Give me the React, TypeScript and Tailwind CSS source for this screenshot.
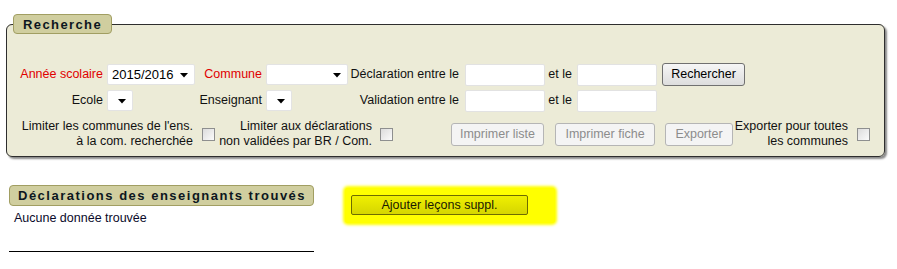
import React from 'react'

const font = { fontFamily: '"Liberation Sans", Arial, sans-serif' }

function Select({ value, w }: { value?: string; w: string }) {
  return (
    <div className={`${w} h-[21px] flex items-center justify-between bg-white border border-[#e3e3e3] rounded-[2px] pl-[4px] pr-[6px] text-[13px] text-black`}>
      <span>{value ?? ''}</span>
      <svg width="8" height="5" viewBox="0 0 8 5" className="mt-[2px] shrink-0">
        <path d="M0 0h8L4 4.5z" fill="#000" />
      </svg>
    </div>
  )
}

function Input() {
  return <div className="w-[80px] h-[22px] bg-white border border-[#e2e2e2] rounded-[2px]" />
}

function Checkbox() {
  return (
    <div className="w-[13px] h-[13px] border border-[#8e8f8f] bg-gradient-to-br from-[#dcdcdc] to-[#fbfbfb] shrink-0" />
  )
}

function Btn({ label, w, disabled }: { label: string; w: string; disabled?: boolean }) {
  return (
    <div
      className={`${w} h-[23px] flex items-center justify-center rounded-[3px] whitespace-nowrap border ${
        disabled
          ? 'border-[#b5b5b5] bg-[#f4f4f4] text-[#8c8c8c]'
          : 'border-[#707070] bg-gradient-to-b from-[#f6f6f6] to-[#dddddd] text-black'
      }`}
    >
      {label}
    </div>
  )
}

export default function App() {
  return (
    <div style={font} className="w-[897px] h-[269px] bg-white pt-[14px] pl-[6px] text-[12.5px] leading-[15px] text-[#111]">
      <fieldset className="w-[879px] border border-[#2e2e2e] rounded-[6px] bg-[#ecebd7] px-[6px] pt-[30px] pb-[7px] shadow-[2px_2px_2px_#8a8a8a]">
        <legend className="h-[20px] px-[9px] flex items-center bg-[#d0ce9f] border border-[#a19e62] rounded-[4px] text-[13px] font-bold tracking-[1.4px] text-[#0c1620]">
          Recherche
        </legend>

        <div className="flex items-center h-[21px] whitespace-nowrap">
          <div className="w-[94px] pr-[4px] text-right text-[#e00000]">Année scolaire</div>
          <Select value="2015/2016" w="w-[88px]" />
          <div className="w-[71px] pr-[4px] text-right text-[#e00000]">Commune</div>
          <Select w="w-[82px]" />
          <div className="w-[117px] pr-[6px] text-right">Déclaration entre le</div>
          <Input />
          <div className="w-[32px] pr-[5px] text-right">et le</div>
          <Input />
          <div className="ml-[5px]">
            <Btn label="Rechercher" w="w-[83px]" />
          </div>
        </div>

        <div className="flex items-center h-[21px] mt-[5px] whitespace-nowrap">
          <div className="w-[94px] pr-[4px] text-right">Ecole</div>
          <Select w="w-[26px]" />
          <div className="w-[133px] pr-[4px] text-right">Enseignant</div>
          <Select w="w-[26px]" />
          <div className="w-[56px]" />
          <div className="w-[117px] pr-[6px] text-right">Validation entre le</div>
          <Input />
          <div className="w-[32px] pr-[5px] text-right">et le</div>
          <Input />
        </div>

        <div className="flex items-center h-[30px] mt-[8px] whitespace-nowrap">
          <div className="w-[184px] pr-[4px] text-right">
            Limiter les communes de l'ens.
            <br />à la com. recherchée
          </div>
          <div className="ml-[5px]">
            <Checkbox />
          </div>
          <div className="w-[161px] pr-[4px] text-right">
            Limiter aux déclarations
            <br />non validées par BR / Com.
          </div>
          <div className="ml-[4px]">
            <Checkbox />
          </div>
          <div className="ml-[58px]">
            <Btn label="Imprimer liste" w="w-[93px]" disabled />
          </div>
          <div className="ml-[11px]">
            <Btn label="Imprimer fiche" w="w-[100px]" disabled />
          </div>
          <div className="ml-[10px]">
            <Btn label="Exporter" w="w-[68px]" disabled />
          </div>
          <div className="w-[119px] pr-[4px] text-right">
            Exporter pour toutes
            <br />les communes
          </div>
          <div className="ml-[5px]">
            <Checkbox />
          </div>
        </div>
      </fieldset>

      <div className="flex items-start mt-[28px] ml-[3px]">
        <div className="w-[305px]">
          <div className="h-[21px] flex items-center px-[8px] bg-[#d0ce9f] border border-[#a19e62] rounded-[4px] text-[13px] font-bold tracking-[1.5px] text-[#0c1620] whitespace-nowrap">
            Déclarations des enseignants trouvés
          </div>
          <div className="pl-[5px] mt-[5px] text-[#0a0a2a]">Aucune donnée trouvée</div>
          <div className="mt-[25px] border-t border-black" />
        </div>
        <div className="ml-[31px] mt-[3px] bg-[#ffff00] pl-[6px] pr-[27px] pt-[7px] pb-[8px] shadow-[0_0_3px_2px_#ffff00] rounded-[3px]">
          <div className="w-[177px] h-[20px] flex items-center justify-center rounded-[2px] border border-[#6e6c00] bg-gradient-to-b from-[#f0f000] to-[#d6d600] text-[#1a1a00]">
            Ajouter leçons suppl.
          </div>
        </div>
      </div>
    </div>
  )
}
